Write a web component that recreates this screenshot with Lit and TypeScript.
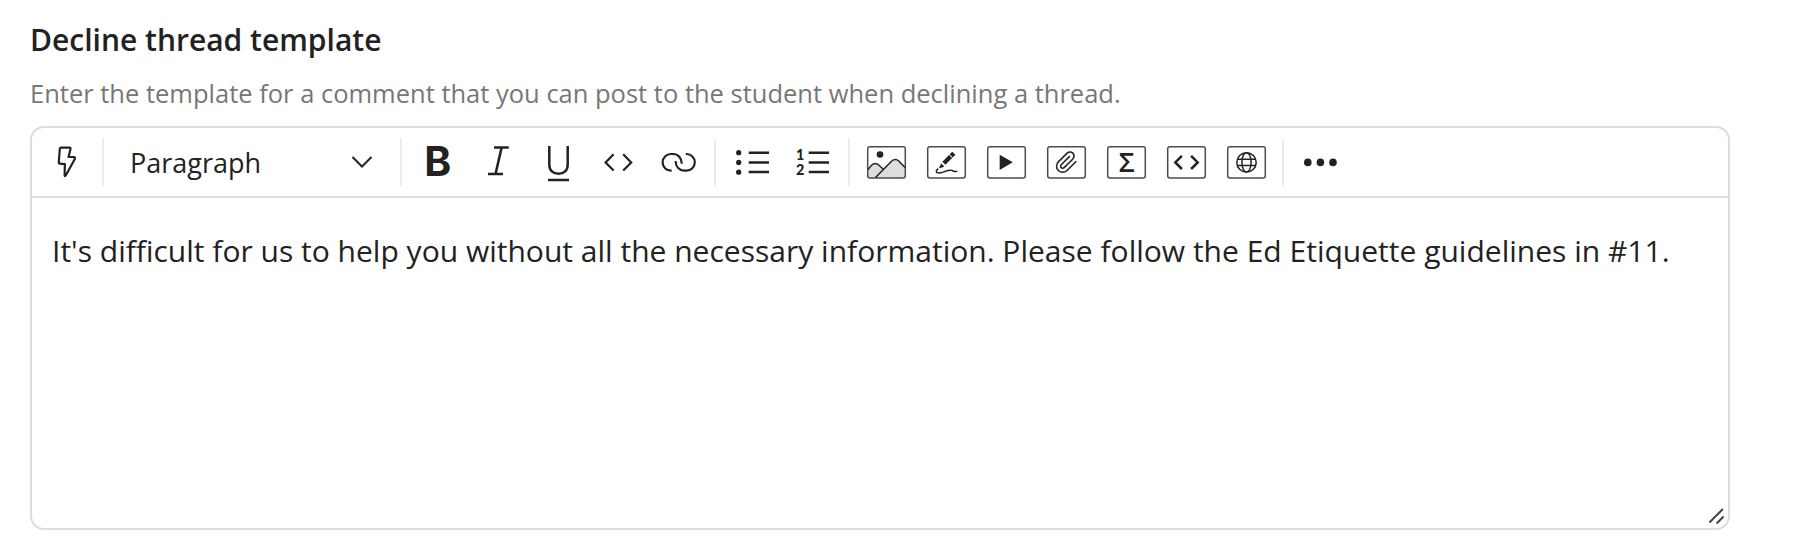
import { LitElement, html, svg, css } from "lit";
import { customElement } from "lit/decorators.js";

const frame = svg`<rect class="frame" x="11.7" y="14.7" width="37.6" height="31.3" rx="2.2" />`;

const icons = {
  bolt: svg`<path class="line" d="M25.2 15.6H33.4Q34.8 15.6 34.5 17L32.6 24.8L38 25.2Q39.5 25.5 38.8 27L30 43Q28.6 45.4 28.6 43L28.9 32.2L24 31.6Q22.6 31.4 22.8 29.8L23.8 17Q24 15.6 25.2 15.6Z" />`,
  bold: svg`<text class="bold" x="16.2" y="43.6">B</text>`,
  italic: svg`<path class="line thick" d="M26 15.6H40.8M20 42.1H35M33.6 15.6L27.5 42.1" />`,
  underline: svg`<path class="line thick" d="M21.3 14V32.5C21.3 38.5 25 41.7 30.5 41.7S39.7 38.5 39.7 32.5V14M20 48H41" />`,
  code: svg`<path class="line" d="M25.6 22.2L17.6 30.4L25.6 38.6M35.2 22.2L43.2 30.4L35.2 38.6" />`,
  link: svg`<path class="line" d="M23.7 38.6H22.9A8.3 8.3 0 0 1 22.9 22H25C30 22 33.8 25.8 33.8 31.7M37.7 22H38.5A8.3 8.3 0 0 1 38.5 38.6H36.4C31.4 38.6 27.6 34.8 27.6 28.9" />`,
  bullets: svg`<path class="line thick" d="M26.7 20.7H47M26.7 30.4H47M26.7 40.1H47" />
    <circle cx="16.7" cy="20.7" r="2.6" /><circle cx="16.7" cy="30.4" r="2.6" /><circle cx="16.7" cy="40.2" r="2.6" />`,
  numbers: svg`<path class="line thick" d="M26.7 20.7H47M26.7 30.4H47M26.7 40.1H47" />
    <text class="digit" x="14" y="28.2">1</text><text class="digit" x="14" y="42.7">2</text>`,
  image: svg`<path class="hill" d="M12 37.4L15.5 33.2Q19.3 29.7 23 33.2L27.3 37.3L35.5 29.2Q39.4 25.8 43 29.2L49 35.5V46H12Z" />
    ${frame}<path class="line thin" d="M12 37.4L15.5 33.2Q19.3 29.7 23 33.2L27.3 37.3M19.5 45.5L35.5 29.2Q39.4 25.8 43 29.2L49 35.5" />
    <circle cx="24" cy="22.5" r="3.3" />`,
  draw: svg`${frame}<path class="pen" d="M27.9 31.2L34.6 24.5M35.2 23.9L37.8 21.3" />
    <path d="M25.2 31.4L28.4 34.6L24 36.2L23.2 35.4Z" />
    <path class="line thin" d="M22.2 36.6Q19.6 38.8 20.6 40.2Q22 41.7 27 40.1Q33 37.4 36 38.4Q38 40.3 41.2 39.2" />`,
  video: svg`${frame}<path d="M23.7 22.8L36.8 30.3L23.7 38Z" />`,
  clip: svg`${frame}<path class="line thin" transform="translate(18.5 17.9) scale(1.02)" d="m21.44 11.05-9.19 9.19a6 6 0 0 1-8.49-8.49l8.57-8.57A4 4 0 1 1 18 8.84l-8.59 8.57a2 2 0 0 1-2.83-2.83l8.49-8.48" />`,
  math: svg`${frame}<text class="sigma" x="22.8" y="40.3">Σ</text>`,
  snippet: svg`${frame}<path class="line thick" d="M25.9 23.8L19.3 30.4L25.9 37M35.1 23.8L41.7 30.4L35.1 37" />`,
  globe: svg`${frame}<g class="line thin"><circle cx="30.5" cy="30.4" r="9.7" /><ellipse cx="30.5" cy="30.4" rx="4.6" ry="9.7" /><path d="M21.3 27.2H39.7M21.3 33.5H39.7" /></g>`,
  more: svg`<circle cx="17.8" cy="30.4" r="3.8" /><circle cx="30.4" cy="30.4" r="3.8" /><circle cx="43" cy="30.4" r="3.8" />`,
};

type IconName = keyof typeof icons;

const groups: IconName[][] = [
  ["bold", "italic", "underline", "code", "link"],
  ["bullets", "numbers"],
  ["image", "draw", "video", "clip", "math", "snippet", "globe"],
  ["more"],
];

@customElement("tool-button")
class ToolButton extends LitElement {
  static properties = { icon: {} };
  declare icon: IconName;

  static styles = css`
    :host { display: block; flex: none; width: 60px; height: 60px; }
    svg { display: block; fill: #222; }
    .line { fill: none; stroke: #222; stroke-width: 2.2; }
    .thick { stroke-width: 2.5; }
    .thin { stroke-width: 1.5; }
    .frame { fill: none; stroke: #4c4c4c; stroke-width: 1.5; }
    .hill { fill: #ddd; }
    .pen { fill: none; stroke: #222; stroke-width: 4.4; }
    .bold { font: 700 40.8px Inter, sans-serif; }
    .digit { font: 900 14.3px Lato, sans-serif; }
    .sigma { font: 600 27.5px "Open Sans", sans-serif; }
  `;

  render() {
    return html`<svg width="60" height="60" viewBox="0 0 60 60">${icons[this.icon]}</svg>`;
  }
}

@customElement("app-root")
class AppRoot extends LitElement {
  static styles = css`
    :host {
      display: block; box-sizing: border-box; height: 558px; padding: 19px 66px 28px 30px;
      background: #fff; color: #222; font-family: "Open Sans", sans-serif;
    }
    .title { margin: 0; font-size: 30px; line-height: 41px; font-weight: 600; }
    .hint { margin: 15px 0 0; font-size: 25.5px; line-height: 36px; color: #777; }
    .editor {
      display: flex; flex-direction: column; box-sizing: border-box; height: 404px;
      margin-top: 15px; border: 2px solid #ddd; border-radius: 14px;
    }
    .toolbar { display: flex; align-items: center; height: 68px; padding: 0 4px; border-bottom: 2px solid #ddd; }
    .separator { flex: none; width: 2px; height: 48px; margin: 0 6px; background: #ececec; }
    .select {
      display: flex; align-items: center; justify-content: space-between; box-sizing: border-box;
      width: 284px; height: 60px; padding: 0 21px 0 20px; font-size: 27px;
    }
    .chevron { fill: none; stroke: #222; stroke-width: 2; }
    .content { flex: 1; padding: 32px 20px 0; }
    .text { margin: 0; font-size: 30.02px; line-height: 42px; white-space: nowrap; }
    .footer { display: flex; justify-content: flex-end; height: 22px; padding-right: 3px; }
    .grip { fill: none; stroke: #444; stroke-width: 2; }
  `;

  render() {
    return html`
      <h2 class="title">Decline thread template</h2>
      <p class="hint">Enter the template for a comment that you can post to the student when declining a thread.</p>
      <div class="editor">
        <div class="toolbar">
          <tool-button .icon=${"bolt"}></tool-button>
          <span class="separator"></span>
          <div class="select">
            <span>Paragraph</span>
            <svg class="chevron" width="22" height="14" viewBox="0 0 22 14"><path d="M1.5 2L11 11.5L20.5 2" /></svg>
          </div>
          ${groups.map((group) => html`
            <span class="separator"></span>
            ${group.map((name) => html`<tool-button .icon=${name}></tool-button>`)}
          `)}
        </div>
        <div class="content">
          <p class="text">It's difficult for us to help you without all the necessary information. Please follow the Ed Etiquette guidelines in #11.</p>
        </div>
        <div class="footer">
          <svg class="grip" width="17" height="20" viewBox="0 0 17 20"><path d="M1.4 16.5L14.9 3M8.6 17.5L15.6 10.5" /></svg>
        </div>
      </div>
    `;
  }
}
